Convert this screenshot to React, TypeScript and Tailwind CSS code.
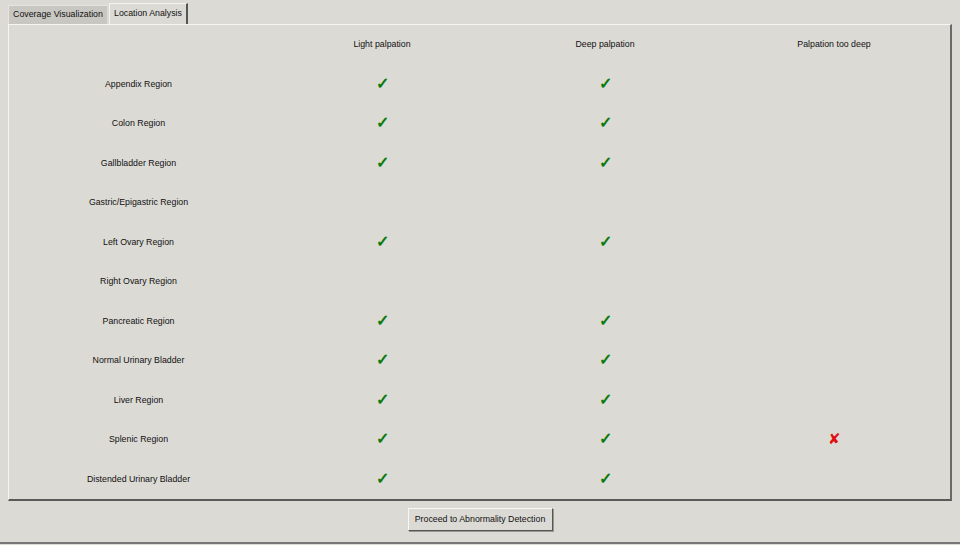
import React from 'react'

const rows: [string, boolean, boolean, boolean][] = [
  ['Appendix Region', true, true, false],
  ['Colon Region', true, true, false],
  ['Gallbladder Region', true, true, false],
  ['Gastric/Epigastric Region', false, false, false],
  ['Left Ovary Region', true, true, false],
  ['Right Ovary Region', false, false, false],
  ['Pancreatic Region', true, true, false],
  ['Normal Urinary Bladder', true, true, false],
  ['Liver Region', true, true, false],
  ['Splenic Region', true, true, true],
  ['Distended Urinary Bladder', true, true, false],
]

const cols = 'grid grid-cols-[259px_228px_218px_240px] items-center h-[39.5px]'

function Check() {
  return <span className="text-[16px] leading-none font-bold text-[#0b7a0b]">✓</span>
}

function Cross() {
  return <span className="text-[15px] leading-none text-[#e01010]">✘</span>
}

export default function App() {
  return (
    <div
      className="w-[960px] h-[545px] bg-[#dcdad5] text-[#111] text-[8.8px] flex flex-col overflow-hidden whitespace-nowrap"
      style={{ fontFamily: '"Liberation Sans", Arial, sans-serif' }}
    >
      {/* Tabs */}
      <div className="flex items-end h-[24px] pl-[8px] gap-[2px]">
        <div className="h-[19px] w-[99px] bg-[#c9c7c2] border-t border-l border-[#e6e4df] flex items-center justify-center">
          Coverage Visualization
        </div>
        <div className="h-[21px] w-[79px] bg-[#dcdad5] border border-b-0 border-[#f4f3f0] border-r-2 border-r-[#555] flex items-center justify-center">
          Location Analysis
        </div>
      </div>

      {/* Panel */}
      <div className="ml-[8px] w-[944px] h-[477px] overflow-hidden border-t border-l border-[#f6f5f2] border-r-2 border-b-2 border-r-[#6a6a6a] border-b-[#5a5a5a]">
        <div className={cols}>
          <div />
          <div className="text-center">Light palpation</div>
          <div className="text-center">Deep palpation</div>
          <div className="text-center">Palpation too deep</div>
        </div>
        {rows.map(([name, light, deep, tooDeep]) => (
          <div key={name} className={cols}>
            <div className="text-center">{name}</div>
            <div className="text-center">{light && <Check />}</div>
            <div className="text-center">{deep && <Check />}</div>
            <div className="text-center">{tooDeep && <Cross />}</div>
          </div>
        ))}
      </div>

      {/* Bottom */}
      <div className="flex justify-center pt-[7px]">
        <button className="h-[23px] w-[145px] bg-[#dcdad5] border border-t-[#f8f7f4] border-l-[#f8f7f4] border-r-[#555] border-b-[#555] shadow-[1px_1px_0_#9a9894]">
          Proceed to Abnormality Detection
        </button>
      </div>
      <div className="flex-1" />
      <div className="h-[2px] bg-[#777] mb-[1px]" />
    </div>
  )
}
